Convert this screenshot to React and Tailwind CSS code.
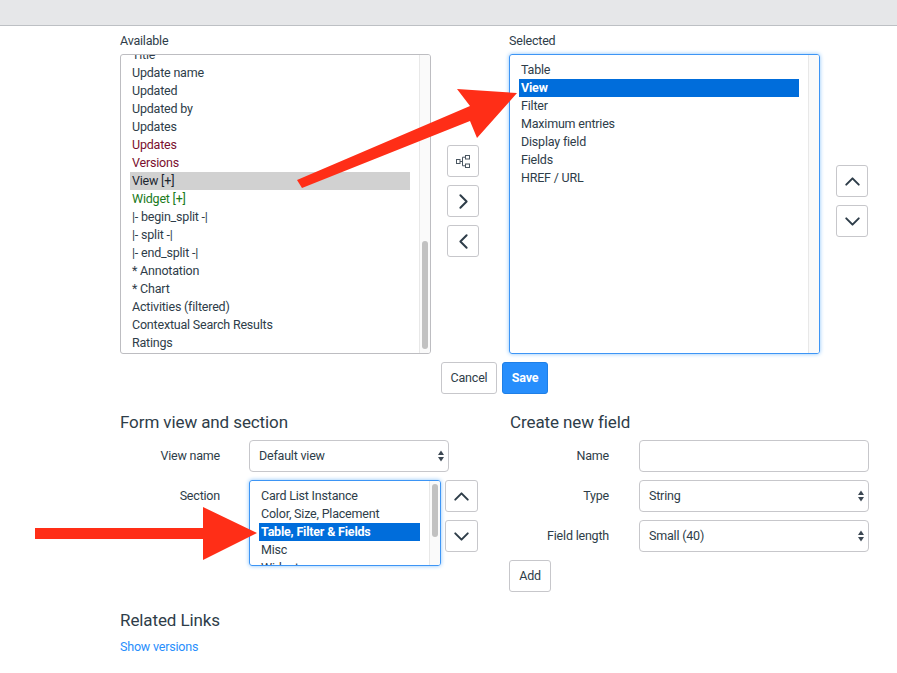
import { ChevronLeft, ChevronRight, ChevronUp, ChevronDown } from "lucide-react";

const available = [
  { label: "Title" },
  { label: "Update name" },
  { label: "Updated" },
  { label: "Updated by" },
  { label: "Updates" },
  { label: "Updates", color: "text-[#7a0f2e]" },
  { label: "Versions", color: "text-[#7a0f2e]" },
  { label: "View [+]", active: true },
  { label: "Widget [+]", color: "text-[#1a7a1a]" },
  { label: "|- begin_split -|" },
  { label: "|- split -|" },
  { label: "|- end_split -|" },
  { label: "* Annotation" },
  { label: "* Chart" },
  { label: "Activities (filtered)" },
  { label: "Contextual Search Results" },
  { label: "Ratings" },
];

const selected = ["Table", "View", "Filter", "Maximum entries", "Display field", "Fields", "HREF / URL"];
const sections = ["Card List Instance", "Color, Size, Placement", "Table, Filter & Fields", "Misc", "Widgets"];

function IconBtn({ children, className = "w-8" }) {
  return (
    <button className={`h-8 flex items-center justify-center bg-white border border-[#c7c7cb] rounded-[3px] text-[#2e3d49] ${className}`}>
      {children}
    </button>
  );
}

function Row({ label, active, color = "text-[#2e3d49]" }) {
  return (
    <div className={`h-[18px] leading-[18px] px-[2px] whitespace-nowrap ${active ? "bg-[#d1d1d1] text-[#1c2630]" : color}`}>
      {label}
    </div>
  );
}

function BlueRow({ label }) {
  return <div className="h-[18px] leading-[18px] px-[2px] whitespace-nowrap bg-[#006ddb] text-white font-bold">{label}</div>;
}

function Track({ thumb }) {
  return (
    <div className="w-[11px] shrink-0 bg-[#fafafa] border-l border-[#e8e8e8] relative">
      {thumb}
    </div>
  );
}

function Stepper() {
  return (
    <svg width="6" height="12" viewBox="0 0 6 12" className="absolute right-[4px] top-[9px]">
      <path d="M3 0.5 L6 5 H0 Z" fill="#3c4752" />
      <path d="M3 11.5 L6 7 H0 Z" fill="#3c4752" />
    </svg>
  );
}

function FieldRow({ label, gap, children }) {
  return (
    <div className="flex items-center h-8">
      <div className={`w-[100px] text-right shrink-0 ${gap}`}>{label}</div>
      {children}
    </div>
  );
}

function FakeSelect({ value, className }) {
  return (
    <div className={`relative h-8 border border-[#c7c7cb] rounded-[4px] pl-[9px] leading-[29px] bg-white ${className}`}>
      {value}
      <Stepper />
    </div>
  );
}

export default function App() {
  return (
    <div className="relative w-[897px] h-[673px] overflow-hidden bg-white text-[#2e3d49] text-[12.5px] tracking-[-0.2px] font-['Roboto','Liberation_Sans',sans-serif]">
      {/* Top bar */}
      <div className="h-[26px] bg-[#e6e7e9] border-b border-[#bdc0c4]" />

      <div className="pl-[120px] pt-[5px]">
        {/* Slushbucket */}
        <div className="flex">
          <div className="w-[311px]">
            <div className="h-[18px] leading-[20px] mb-[5px]">Available</div>
            <div className="h-[300px] flex border border-[#bdbdc1] rounded-[3px] overflow-hidden">
              <div className="flex-1 pl-[9px] pr-[9px] -mt-[9px]">
                {available.map((r, i) => (
                  <Row key={i} {...r} />
                ))}
              </div>
              <Track thumb={<div className="absolute left-[2px] top-[186px] w-[6px] h-[108px] rounded-[3px] bg-[#c1c1c1]" />} />
            </div>
          </div>

          <div className="w-[78px] pt-[114px] pl-4 flex flex-col items-start gap-2">
            <IconBtn>
              <svg width="14" height="13" viewBox="0 0 14 13" fill="none" stroke="#4a5661" strokeWidth="1">
                <rect x="0.5" y="4.5" width="3.5" height="4" />
                <rect x="9.5" y="0.5" width="4" height="3.5" />
                <rect x="9.5" y="9" width="4" height="3.5" />
                <path d="M4 6.5H6.5M6.5 2.2V10.8M6.5 2.2H9.5M6.5 10.8H9.5" />
              </svg>
            </IconBtn>
            <IconBtn><ChevronRight size={25} strokeWidth={1.9} /></IconBtn>
            <IconBtn><ChevronLeft size={25} strokeWidth={1.9} /></IconBtn>
          </div>

          <div className="w-[311px]">
            <div className="h-[18px] leading-[20px] mb-[5px]">Selected</div>
            <div className="h-[300px] flex border border-[#3d95f5] rounded-[3px] overflow-hidden shadow-[0_0_4px_#8cc4fb]">
              <div className="flex-1 pl-[9px] pr-[9px] pt-[6px]">
                {selected.map((s) =>
                  s === "View" ? <BlueRow key={s} label={s} /> : <Row key={s} label={s} />
                )}
              </div>
              <Track />
            </div>
          </div>

          <div className="pl-4 pt-[134px] flex flex-col gap-2">
            <IconBtn><ChevronUp size={25} strokeWidth={1.9} /></IconBtn>
            <IconBtn><ChevronDown size={25} strokeWidth={1.9} /></IconBtn>
          </div>
        </div>

        {/* Cancel / Save */}
        <div className="flex gap-[5px] mt-2 pl-[321px]">
          <button className="h-8 w-14 border border-[#c7c7cb] rounded-[3px] bg-white">Cancel</button>
          <button className="h-8 w-[46px] border border-[#1f7fe6] rounded-[3px] bg-[#278efc] text-white font-bold">Save</button>
        </div>

        {/* Forms */}
        <div className="flex mt-[15px]">
          <div className="w-[389px]">
            <h2 className="text-[17px] tracking-[-0.1px] leading-[26px] mb-[5px]">Form view and section</h2>
            <div className="flex flex-col gap-2">
              <FieldRow label="View name" gap="mr-[29px]">
                <FakeSelect value="Default view" className="w-[200px]" />
              </FieldRow>
              <div className="flex items-start">
                <div className="w-[100px] mr-[29px] text-right leading-[31px] shrink-0">Section</div>
                <div className="w-[192px] h-[86px] flex border border-[#3d95f5] rounded-[3px] overflow-hidden shadow-[0_0_4px_#8cc4fb]">
                  <div className="flex-1 pl-[9px] pr-[9px] pt-[6px]">
                    {sections.map((s) =>
                      s.startsWith("Table") ? <BlueRow key={s} label={s} /> : <Row key={s} label={s} />
                    )}
                  </div>
                  <Track thumb={<div className="absolute left-[2px] top-[3px] w-[6px] h-[53px] rounded-[3px] bg-[#c1c1c1]" />} />
                </div>
                <div className="ml-1 flex flex-col gap-2">
                  <IconBtn className="w-[33px]"><ChevronUp size={25} strokeWidth={1.9} /></IconBtn>
                  <IconBtn className="w-[33px]"><ChevronDown size={25} strokeWidth={1.9} /></IconBtn>
                </div>
              </div>
            </div>
          </div>

          <div className="w-[360px]">
            <h2 className="text-[17px] tracking-[-0.1px] leading-[26px] mb-[5px] pl-px">Create new field</h2>
            <div className="flex flex-col gap-2">
              <FieldRow label="Name" gap="mr-[30px]">
                <div className="w-[230px] h-8 border border-[#c7c7cb] rounded-[4px]" />
              </FieldRow>
              <FieldRow label="Type" gap="mr-[30px]">
                <FakeSelect value="String" className="w-[230px]" />
              </FieldRow>
              <FieldRow label="Field length" gap="mr-[30px]">
                <FakeSelect value="Small (40)" className="w-[230px]" />
              </FieldRow>
              <button className="self-start h-8 w-[42px] border border-[#c7c7cb] rounded-[3px] bg-white">Add</button>
            </div>
          </div>
        </div>

        {/* Related links */}
        <div>
          <h2 className="text-[17px] tracking-[-0.1px] leading-[26px] mt-[15px] mb-[5px]">Related Links</h2>
          <a className="block text-[#278efc] leading-[18px]">Show versions</a>
        </div>
      </div>

      {/* Red annotation arrows */}
      <svg className="absolute left-0 top-0 pointer-events-none" width="897" height="673">
        <polygon fill="#ff2e17" points="297,180 470,106 457,89 517,93 477,138 470,121 302,188" />
        <polygon fill="#ff2e17" points="35,528 203,528 203,507 257,533 203,560 203,539 35,539" />
      </svg>
    </div>
  );
}
